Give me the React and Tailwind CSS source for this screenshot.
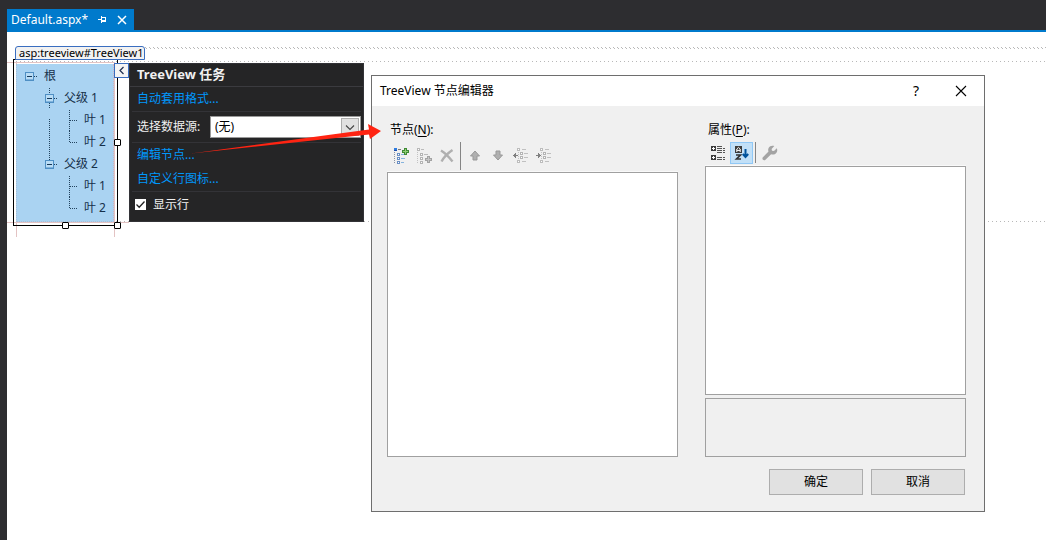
import React from "react";

function TreeCell({ type }) {
  return (
    <svg width="20" height="22" className="shrink-0" shapeRendering="crispEdges" aria-hidden="true">
      <g className="stroke-[#22435f]" strokeDasharray="1 1" fill="none">
        {type === "line" && <path d="M9.5 0V22" />}
        {type === "lineStart" && <path d="M9.5 10V22" />}
        {type === "branch" && <path d="M9.5 1V22M10 11.5H18" />}
        {type === "last" && <path d="M9.5 0V12M10 11.5H18" />}
        {type === "toggleMid" && <path d="M9.5 1V7M9.5 16V21M14 11.5H18" />}
        {type === "toggleEnd" && <path d="M9.5 0V7M14 11.5H18" />}
        {type === "toggle" && <path d="M14 11.5H18" />}
      </g>
      {type.startsWith("toggle") && (
        <g>
          <rect x="5.5" y="7.5" width="8" height="8" rx="1" fill="#b9dcf5" stroke="#4f8fc4" />
          <path d="M6 14.5H13" stroke="#7fb2dc" />
          <path d="M7 11.5H12" stroke="#16395a" />
        </g>
      )}
    </svg>
  );
}

const treeRows = [
  { text: "根", cells: ["toggle"] },
  { text: "父级 1", cells: ["blank", "toggleMid"] },
  { text: "叶 1", cells: ["blank", "lineStart", "branch"] },
  { text: "叶 2", cells: ["blank", "line", "last"] },
  { text: "父级 2", cells: ["blank", "toggleEnd"] },
  { text: "叶 1", cells: ["blank", "blank", "branch"] },
  { text: "叶 2", cells: ["blank", "blank", "last"] },
];

function DesignedTree() {
  return (
    <div className="absolute left-[6px] top-[27px] w-[105px] border border-black pt-1 pb-[3px] pl-[2px] pr-[3px]">
      <ul className="bg-[#aad3f2] border border-dotted border-[#a9bfd6] border-t-0 border-r-[#d5b3bf] pt-px pb-[2px] pl-[3px] text-[12px] text-[#16304a]">
        {treeRows.map((row, i) => (
          <li key={i} className="flex h-[22px] items-center">
            {row.cells.map((c, j) => (
              <TreeCell key={j} type={c} />
            ))}
            <span className="pl-1 whitespace-nowrap">{row.text}</span>
          </li>
        ))}
      </ul>
      <i className="absolute -right-[4px] top-[79px] size-[7px] rounded-[1px] border border-black bg-white" />
      <i className="absolute -right-[4px] -bottom-[4px] size-[7px] rounded-[1px] border border-black bg-white" />
      <i className="absolute left-[48px] -bottom-[4px] size-[7px] rounded-[1px] border border-black bg-white" />
    </div>
  );
}

function TaskPanel() {
  return (
    <section className="absolute left-[122px] top-[31px] w-[235px] border border-[#333337] bg-[#252526] pb-1 text-[12px] text-[#f1f1f1]">
      <h2 className="flex h-[23px] items-center border-b border-[#3b3b3f] px-[7px] text-[13px] font-bold">TreeView 任务</h2>
      <div className="px-[2px]">
        <div className="flex h-[25px] items-center border-b border-[#333337] px-[5px]">
          <a href="#format" className="text-[#0097fb]">自动套用格式...</a>
        </div>
        <div className="flex h-[31px] items-center justify-between border-b border-[#333337] pl-[5px]">
          <label htmlFor="source">选择数据源:</label>
          <div className="relative">
            <select id="source" className="block h-[22px] w-[151px] appearance-none border border-[#999] bg-white pl-1 text-[12px] text-black">
              <option>(无)</option>
            </select>
            <svg width="18" height="18" className="pointer-events-none absolute right-[2px] top-[2px]" aria-hidden="true">
              <rect x=".5" y=".5" width="17" height="17" fill="#e1e1e1" stroke="#adadad" />
              <path d="M5 7.5L9 11.5L13 7.5" fill="none" stroke="#444" strokeWidth="1.1" />
            </svg>
          </div>
        </div>
        <div className="flex h-[49px] flex-col border-b border-[#333337] px-[5px] leading-6">
          <a href="#nodes" className="text-[#0097fb]">编辑节点...</a>
          <a href="#icons" className="text-[#0097fb]">自定义行图标...</a>
        </div>
        <label className="flex h-[25px] items-center gap-[7px] pl-[3px]">
          <span className="relative flex">
            <input type="checkbox" defaultChecked className="peer size-[11px] appearance-none bg-white" />
            <svg width="11" height="11" className="pointer-events-none absolute inset-0 hidden peer-checked:block" aria-hidden="true">
              <path d="M1.5 5.5L4.2 8.2L9.5 2.5" fill="none" stroke="#222" strokeWidth="1.3" />
            </svg>
          </span>
          显示行
        </label>
      </div>
    </section>
  );
}

function NodeBox({ x, y, c }) {
  return <rect x={x + 0.5} y={y + 0.5} width="2" height="2" fill="#fff" stroke={c} />;
}

function AddRootIcon() {
  return (
    <svg width="16" height="16" aria-hidden="true" shapeRendering="crispEdges">
      <path d="M1.5 4V16" stroke="#8a93a5" strokeDasharray="1 1" />
      <rect x="1" y="0" width="3" height="3" fill="#2f7be0" />
      <rect x="1" y="2" width="3" height="1" fill="#1d4fae" />
      <path d="M5 1.5H8" stroke="#777" />
      <path d="M8 6.5H12M8 10.5H12M8 14.5H11" stroke="#86b3dd" />
      <NodeBox x={4} y={5} c="#6a8fc4" />
      <NodeBox x={4} y={9} c="#6a8fc4" />
      <NodeBox x={4} y={13} c="#6a8fc4" />
      <path d="M11 0H14V2H16V5H14V7H11V5H9V2H11Z" fill="#3f8a35" />
      <path d="M12 1H13V3H15V4H13V6H12V4H10V3H12Z" fill="#8fce74" />
    </svg>
  );
}

function AddChildIcon() {
  return (
    <svg width="16" height="16" aria-hidden="true" shapeRendering="crispEdges">
      <path d="M1.5 4V16" stroke="#c2c2c2" strokeDasharray="1 1" />
      <NodeBox x={1} y={0} c="#b8b8b8" />
      <NodeBox x={4} y={5} c="#b4b4b4" />
      <NodeBox x={4} y={9} c="#b4b4b4" />
      <NodeBox x={4} y={13} c="#b4b4b4" />
      <path d="M5 1.5H8M8 6.5H12" stroke="#bbb" />
      <path d="M11 8H14V10H16V13H14V15H11V13H9V10H11Z" fill="#a3a3a3" />
      <path d="M12 9H13V11H15V12H13V14H12V12H10V11H12Z" fill="#c5c5c5" />
    </svg>
  );
}

function DeleteIcon() {
  return (
    <svg width="16" height="16" aria-hidden="true">
      <path d="M2 2.5C6 5 10 9 13.5 13.5M13.5 2C9 5 5 9 2.5 13.5" fill="none" stroke="#b0b0b0" strokeWidth="2.4" />
    </svg>
  );
}

function MoveIcon({ down }) {
  return (
    <svg width="16" height="16" aria-hidden="true">
      <path
        d={down ? "M6 3H10V7H12.5L8 12L3.5 7H6Z" : "M6 12H10V8H12.5L8 3L3.5 8H6Z"}
        fill="#b0b0b0"
        stroke="#999"
      />
    </svg>
  );
}

function IndentIcon({ right }) {
  return (
    <svg width="16" height="16" aria-hidden="true" shapeRendering="crispEdges">
      <path d="M5.5 4V13" stroke="#c4c4c4" strokeDasharray="1 1" />
      <NodeBox x={4} y={0} c="#bcbcbc" />
      <NodeBox x={7} y={4} c="#b4b4b4" />
      <NodeBox x={7} y={8} c="#b4b4b4" />
      <NodeBox x={4} y={12} c="#bcbcbc" />
      <path d="M9 1.5H13M11 5.5H15M11 9.5H15M9 13.5H13" stroke="#c0c0c0" />
      <path d={right ? "M0 7.5H5M2.5 5V10M3.5 6V9" : "M0 7.5H5M2.5 5V10M1.5 6V9"} stroke="#808080" />
    </svg>
  );
}

function CategoryIcon() {
  return (
    <svg width="16" height="16" aria-hidden="true" shapeRendering="crispEdges">
      <path d="M1 1H6V6H1ZM1 10H6V15H1Z" fill="#3c3c3c" />
      <path d="M2 3.5H5M3.5 2V5M2 12.5H5M3.5 11V14" stroke="#fff" />
      <path d="M7 1.5H12M7 3.5H12M7 5.5H12M7 7.5H12M7 12.5H12M7 14.5H12M13 3.5H15M13 5.5H15M13 7.5H15M13 12.5H15M13 14.5H15" stroke="#555" />
    </svg>
  );
}

function SortIcon() {
  return (
    <svg width="16" height="16" aria-hidden="true">
      <rect x="1" y="1" width="7" height="7" fill="#3c3c3c" />
      <path d="M2.8 7V4L4.5 2.4L6.2 4V7M3 5.4H6" fill="none" stroke="#fff" strokeWidth="1" />
      <path d="M2 10H6.5L2.5 14H7" fill="none" stroke="#333" strokeWidth="1.7" />
      <path d="M11.5 4V12M8.8 9L11.5 12L14.2 9" fill="none" stroke="#00539c" strokeWidth="2" />
    </svg>
  );
}

function WrenchIcon() {
  return (
    <svg width="16" height="16" aria-hidden="true">
      <path
        d="M14.8 3.2L12 6L10 5.8L9.6 3.9L12.3 1.1C10.2.3 7.7.9 6.6 3C6 4.2 6.1 5.5 6.5 6.6L.9 12.2C.2 13 .3 14.1 1 14.8C1.7 15.5 2.8 15.4 3.5 14.7L9.1 9.2C11.4 10.1 13.9 9.1 14.9 6.9C15.4 5.6 15.3 4.3 14.8 3.2Z"
        fill="#a3a3a3"
      />
    </svg>
  );
}

function ToolButton({ label, disabled, children }) {
  return (
    <button type="button" aria-label={label} disabled={disabled} className="flex size-[23px] shrink-0 items-center justify-center">
      {children}
    </button>
  );
}

function NodeEditor() {
  return (
    <div role="dialog" aria-labelledby="editor-title" className="absolute left-[364px] top-[43px] w-[614px] border border-[#6e6e6e] bg-[#f0f0f0] text-[12px] text-black">
      <header className="flex h-[30px] items-center bg-white pl-2 pr-[17px]">
        <h2 id="editor-title" className="flex-1">TreeView 节点编辑器</h2>
        <button type="button" aria-label="帮助" className="mr-[33px] w-3 text-[14px] leading-5">?</button>
        <button type="button" aria-label="关闭">
          <svg width="12" height="12" aria-hidden="true">
            <path d="M1 1L11 11M11 1L1 11" stroke="#000" strokeWidth="1.1" />
          </svg>
        </button>
      </header>
      <div className="flex gap-[27px] pl-[15px] pr-[18px] pt-[14px]">
        <div className="flex w-[291px] flex-col">
          <h3 className="h-5 px-[3px] leading-5">节点(<u className="underline-offset-2">N</u>):</h3>
          <div className="flex h-8 items-center border-b border-[#f9f9f9] pl-[2px]">
            <ToolButton label="添加根节点"><AddRootIcon /></ToolButton>
            <ToolButton label="添加子节点" disabled><AddChildIcon /></ToolButton>
            <ToolButton label="删除" disabled><DeleteIcon /></ToolButton>
            <span className="mx-[2px] h-7 w-px bg-[#858585]" />
            <ToolButton label="上移" disabled><MoveIcon /></ToolButton>
            <ToolButton label="下移" disabled><MoveIcon down /></ToolButton>
            <ToolButton label="升级" disabled><IndentIcon /></ToolButton>
            <ToolButton label="降级" disabled><IndentIcon right /></ToolButton>
          </div>
          <div className="h-[285px] border border-[#a0a0a0] bg-white" />
        </div>
        <div className="flex flex-1 flex-col">
          <h3 className="h-5 px-[3px] leading-5">属性(<u className="underline-offset-2">P</u>):</h3>
          <div className="flex h-[26px] items-center border-b border-[#f9f9f9] pl-px">
            <ToolButton label="按分类顺序"><CategoryIcon /></ToolButton>
            <button type="button" aria-label="字母顺序" className="ml-px flex h-[22px] w-[23px] items-center justify-center border border-[#90c8f6] bg-[#c2e0f7]">
              <SortIcon />
            </button>
            <span className="mx-[2px] h-[21px] w-px bg-[#858585]" />
            <ToolButton label="属性页" disabled><WrenchIcon /></ToolButton>
          </div>
          <div className="h-[229px] border border-[#a0a0a0] bg-white" />
          <div className="mt-[3px] h-[59px] border border-[#a0a0a0]" />
        </div>
      </div>
      <footer className="flex justify-end gap-2 pb-4 pr-[19px] pt-3">
        <button type="button" className="h-[26px] w-[94px] border border-[#adadad] bg-[#e1e1e1]">确定</button>
        <button type="button" className="h-[26px] w-[94px] border border-[#adadad] bg-[#e1e1e1]">取消</button>
      </footer>
    </div>
  );
}

function DottedRule({ id, double }) {
  return (
    <svg width="100%" height="2" className="block" shapeRendering="crispEdges" aria-hidden="true">
      <pattern id={id} width="4" height="2" patternUnits="userSpaceOnUse">
        <rect width="1" height="1" fill="#b8b8b8" />
        {double && <rect x="1" y="1" width="1" height="1" fill="#b8b8b8" />}
      </pattern>
      <rect width="100%" height="2" fill={`url(#${id})`} />
    </svg>
  );
}

function DesignSurface() {
  return (
    <main className="relative flex-1 overflow-hidden bg-white">
      <div className="absolute right-0 left-[138px] top-[15px]"><DottedRule id="rule-a" double /></div>
      <div className="absolute right-0 left-[9px] top-[29px]"><DottedRule id="rule-b" /></div>
      <div className="absolute right-0 left-[9px] top-[189px]"><DottedRule id="rule-c" /></div>
      <div className="absolute left-0 top-[30px] w-[108px] border-t border-[#e3c3c3]" />
      <div className="absolute left-0 top-[190px] w-[122px] border-t border-[#e3c3c3]" />
      <div className="absolute left-[9px] top-[30px] h-[175px] w-[99px] border-x border-[#e3c3c3]" />
      <DesignedTree />
      <div className="absolute left-2 top-[14px] flex h-[14px] items-center rounded-t-[3px] border border-[#3a6ec0] bg-[#f2f2f2] pl-[3px] pr-px text-[11px] whitespace-nowrap text-black">
        asp:treeview#TreeView1
      </div>
      <button type="button" aria-label="TreeView 任务" className="absolute left-[107px] top-[31px] flex size-[15px] items-center justify-center border border-[#3a6ec0] bg-[#f4f4f4]">
        <svg width="7" height="9" aria-hidden="true">
          <path d="M5.5 1L2 4.5L5.5 8" fill="none" stroke="#1d2d50" strokeWidth="1.2" />
        </svg>
      </button>
      <TaskPanel />
      <NodeEditor />
      <svg width="190" height="32" className="pointer-events-none absolute left-[184px] top-[90px]" aria-hidden="true">
        <path d="M0 31.5L178 7.5L177 2L190 9L179 17L178 12.5Z" fill="#ff2412" />
      </svg>
    </main>
  );
}

export default function App() {
  return (
    <div className="flex min-h-screen flex-col bg-[#2d2d30] pl-[7px] font-['Noto_Sans','Noto_Sans_CJK_SC',sans-serif]">
      <header className="flex h-8 items-end border-b-2 border-[#007acc]">
        <div className="flex h-[21px] items-center bg-[#007acc] pl-1 pr-[7px] text-[12px] text-white">
          <span className="w-[78px] whitespace-nowrap">Default.aspx*</span>
          <button type="button" aria-label="固定" className="ml-[9px]">
            <svg width="9" height="9" shapeRendering="crispEdges" aria-hidden="true">
              <path d="M0 4.5H3M3.5 1V8M4 2.5H8M7.5 2V7M4 5.5H8M4 6.5H8" fill="none" stroke="#fff" />
            </svg>
          </button>
          <button type="button" aria-label="关闭" className="ml-[10px]">
            <svg width="10" height="10" aria-hidden="true">
              <path d="M1 1L9 9M9 1L1 9" stroke="#fff" strokeWidth="1.5" />
            </svg>
          </button>
        </div>
      </header>
      <DesignSurface />
    </div>
  );
}
